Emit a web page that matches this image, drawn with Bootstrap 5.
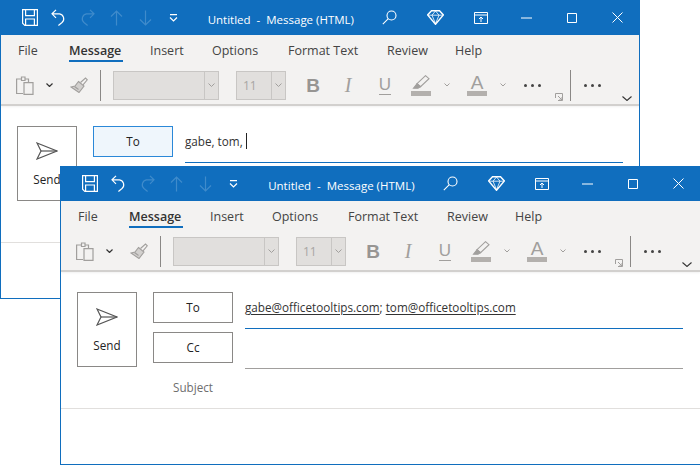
<!DOCTYPE html>
<html lang="en">
<head>
  <meta charset="UTF-8">
  <title>Untitled - Message (HTML)</title>
  <link href="https://cdn.jsdelivr.net/npm/bootstrap@5.3.2/dist/css/bootstrap.min.css" rel="stylesheet">
  <script src="https://cdn.jsdelivr.net/npm/bootstrap@5.3.2/dist/js/bootstrap.bundle.min.js"></script>
  <style>
    html, body { width: 700px; height: 465px; overflow: hidden; background: #fff; }
    body { font-family: "Open Sans", "Liberation Sans", sans-serif; font-size: 11.7px; color: #333; }
    svg { display: block; fill: none; stroke: currentColor; flex: none; }

    .mail-window { position: absolute; width: 640px; height: 299px; background: #fff; border: solid #106ebe; border-width: 0 1px 1px 1px; overflow: hidden; }
    .win-back { left: 0; top: 0; }
    .win-front { left: 60px; top: 166px; width: 641px; }

    .title-bar { height: 35px; background: #106ebe; color: #fff; margin: 0 -1px; }
    .qat { width: 208px; padding-left: 15.5px; }
    .qat-btn { width: 28.8px; }
    .qat-btn svg, .tool-btn svg { margin: 0 auto; }
    .qat-btn.off { color: #3f8bcb; }
    .doc-title { width: 161.5px; padding: 5px 0 0 1px; font-size: 11.5px; white-space: pre; }
    .tool-btn { width: 45.5px; }

    .ribbon { height: 71px; background: #f3f2f1; border-bottom: 2px solid #d2d0ce; position: relative; box-shadow: 0 1px 2px rgba(0,0,0,.06); }
    .tab-row { height: 31px; font-size: 12.5px; color: #444; }
    .tab-item { line-height: 31px; white-space: nowrap; }
    .tab-file { margin-left: 17px; width: 51px; }
    .tab-message { width: 54px; margin-right: 27px; }
    .tab-insert { width: 62px; }
    .tab-options { width: 76px; }
    .tab-format { width: 99px; }
    .tab-review { width: 68px; }
    .tab-item.active { font-weight: 600; color: #333; height: 27px; border-bottom: 2px solid #106ebe; }

    .tool-row { height: 38px; color: #a19f9d; }
    .rib-sep { width: 1px; height: 31px; background: #8a8886; flex: none; margin-left: 12px; }
    .rib-sep.second { margin-left: 7px; }
    .combo { height: 29px; background: #e1dfdd; border: 1px solid #c8c6c4; flex: none; }
    .combo-font { width: 106px; margin-left: 12px; }
    .combo-size { width: 50px; margin-left: 17px; }
    .combo-text { flex: 1 1 auto; color: #a8a6a4; font-size: 12px; padding-left: 6px; line-height: 27px; }
    .combo-arrow { width: 14px; height: 27px; border-left: 1px solid #c8c6c4; color: #a19f9d; flex: none; }
    .fmt { width: 30px; color: #a19f9d; line-height: 1; text-align: center; flex: none; }
    .fmt-b { font-family: "Liberation Sans", sans-serif; font-weight: 700; font-size: 19px; color: #979593; margin-left: 12px; }
    .fmt-i { font-family: "Liberation Serif", serif; font-style: italic; font-size: 20px; margin-left: 5px; }
    .fmt-u { font-family: "Liberation Sans", sans-serif; font-size: 17px; margin-left: 7px; }
    .fmt-u span { display: inline-block; padding: 0 0 1px; border-bottom: 1px solid #a19f9d; line-height: 16px; }
    .color-btn { width: 20px; flex: none; }
    .color-bar { height: 5px; background: #b3b0ad; margin-top: 1px; }
    .color-a { font-family: "Liberation Sans", sans-serif; font-size: 19px; line-height: 15px; text-align: center; color: #a19f9d; }
    .dots { display: flex; gap: 4px; flex: none; }
    .dots i { width: 3px; height: 3px; border-radius: 50%; background: #444; }

    .ic-paste { margin-left: 15px; }
    .ic-paste-drop { margin-left: 12px; color: #333; }
    .ic-brush { margin-left: 17px; }
    .btn-highlight { margin-left: 11px; }
    .drop-small { margin-left: 13px; }
    .btn-fontcolor { margin-left: 17px; }
    .dots-first { margin-left: 18px; }
    .dots-second { margin-left: 13px; }
    .ic-launcher { margin: 0 0 3px 14px; }
    .ic-collapse { margin: 0 0 3px 21px; color: #333; }

    .compose { height: 137px; padding: 20px 0 0 16px; border-bottom: 1px solid #e1dfdd; }
    .send-btn { width: 60px; height: 75px; border: 1px solid #8a8886; color: #222; padding-top: 15px; }
    .send-btn svg { stroke: #555; }
    .send-btn span { margin-top: 11px; line-height: 16px; }
    .addr-col { width: 80px; margin-left: 16px; gap: 9px; }
    .addr-btn { width: 80px; height: 31px; border: 1px solid #8a8886; color: #222; line-height: 28px; text-align: center; }
    .addr-btn.focus { background: #eff6fc; border-color: #2b88d8; }
    .subject { color: #6e6e6e; text-align: center; line-height: 16px; margin-top: 7px; }
    .field-col { width: 438px; margin-left: 12px; }
    .field { line-height: 31px; color: #333; white-space: nowrap; }
    .field-to { height: 37px; border-bottom: 1px solid #106ebe; }
    .field-cc { height: 40px; border-bottom: 1px solid #a19f9d; }
    .field u { text-underline-offset: 2px; }
    .caret-bar { display: inline-block; width: 1px; height: 16px; background: #222; vertical-align: -3px; margin-left: 3px; }
  </style>
</head>
<body>

  <template id="chrome">
    <div class="title-bar d-flex align-items-center">
      <div class="qat d-flex align-items-center">
        <div class="qat-btn"><svg width="16" height="17" viewBox="0 0 16 17" stroke-width="1.2"><path d="M.6.6h14.8v15.800H2.800L.6 14.200z"/><path d="M3.600.6v6h8.800v-6M3.600 16.200v-6.200h8.800v6.200"/></svg></div>
        <div class="qat-btn"><svg width="15" height="17" viewBox="0 0 15 17" stroke-width="1.2"><path d="M5 .8 1 4.800l4 4M1 4.800h7.500a5 5 0 0 1 2.500 8.700l-3.600 3"/></svg></div>
        <div class="qat-btn off"><svg width="15" height="17" viewBox="0 0 15 17" stroke-width="1.2"><path d="m10 .8 4 4-4 4M14 4.800H6.500a5 5 0 0 0-2.500 8.700l3.600 3"/></svg></div>
        <div class="qat-btn off"><svg width="13" height="16" viewBox="0 0 13 16" stroke-width="1.2"><path d="M6.500 15.500V1M1 6.500l5.500-5.500 5.500 5.500"/></svg></div>
        <div class="qat-btn off"><svg width="13" height="16" viewBox="0 0 13 16" stroke-width="1.2"><path d="M6.500.5V15M1 9.500l5.500 5.500 5.500-5.500"/></svg></div>
        <div class="qat-btn"><svg width="9" height="8" viewBox="0 0 9 8" stroke-width="1.2"><path d="M1 .6h7M1 3.500l3.500 3.500L8 3.500"/></svg></div>
      </div>
      <div class="doc-title">Untitled  -  Message (HTML)</div>
      <div class="d-flex align-items-center">
        <div class="tool-btn"><svg width="15" height="15" viewBox="0 0 15 15" stroke-width="1.1"><circle cx="9.500" cy="5.500" r="4.500"/><path d="M6.300 8.700.8 14.200"/></svg></div>
        <div class="tool-btn"><svg width="17" height="15" viewBox="0 0 17 15" stroke-width=".8"><path d="M4.500.7h8l3.900 4.300-7.900 9.300L.6 5z" stroke-width="1.400"/><path d="M1 5.200h15M5 5.200l3.500 8.500L12 5.200 8.500 1z"/></svg></div>
        <div class="tool-btn"><svg width="14" height="12" viewBox="0 0 14 12" stroke-width="1"><path d="M.5.5h13v11H.5zM.5 3h13M7 10V5M5 7l2-2 2 2"/></svg></div>
        <div class="tool-btn"><svg width="11" height="2" viewBox="0 0 11 2"><path d="M0 1h11"/></svg></div>
        <div class="tool-btn"><svg width="10" height="10" viewBox="0 0 10 10"><path d="M.5.5h9v9h-9z"/></svg></div>
        <div class="tool-btn"><svg width="11" height="11" viewBox="0 0 11 11"><path d="m.5.5 10 10M10.500.5l-10 10"/></svg></div>
      </div>
    </div>
    <div class="ribbon">
      <div class="tab-row d-flex align-items-start">
        <div class="tab-item tab-file">File</div>
        <div class="tab-item tab-message active">Message</div>
        <div class="tab-item tab-insert">Insert</div>
        <div class="tab-item tab-options">Options</div>
        <div class="tab-item tab-format">Format Text</div>
        <div class="tab-item tab-review">Review</div>
        <div class="tab-item">Help</div>
      </div>
      <div class="tool-row d-flex align-items-center">
        <svg class="ic-paste" width="18" height="19" viewBox="0 0 18 19" stroke-width="1.2"><path d="M5 3H.6v14.500H7M5.500 1h3.500v3.500H5.500zM9 3h3.500v3"/><path d="M8 6.600h9v11.800H8z"/></svg>
        <svg class="ic-paste-drop" width="7" height="4" viewBox="0 0 7 4" stroke-width="1.2"><path d="m.5.500 3 3 3-3"/></svg>
        <svg class="ic-brush" width="18" height="16" viewBox="0 0 18 16" stroke-width="1.1"><path d="m10.500 5.500 5-4.500 1.800 1.800-4.300 5"/><path d="m8.500 4.500 5.500 4.500-5 6.500-8-5.500 4-1z" fill="#d2d0ce"/><path d="m4.500 9.500 4 3"/></svg>
        <div class="rib-sep"></div>
        <div class="combo combo-font d-flex">
          <div class="combo-text"></div>
          <div class="combo-arrow d-flex align-items-center justify-content-center"><svg width="7" height="4" viewBox="0 0 7 4"><path d="m.5.500 3 3 3-3"/></svg></div>
        </div>
        <div class="combo combo-size d-flex">
          <div class="combo-text">11</div>
          <div class="combo-arrow d-flex align-items-center justify-content-center"><svg width="7" height="4" viewBox="0 0 7 4"><path d="m.5.500 3 3 3-3"/></svg></div>
        </div>
        <div class="fmt fmt-b">B</div>
        <div class="fmt fmt-i">I</div>
        <div class="fmt fmt-u"><span>U</span></div>
        <div class="color-btn btn-highlight">
          <svg width="20" height="15" viewBox="0 0 20 15" stroke-width="1.1"><path d="m14.500.7 3.500 3-8.500 8-3.500-3z"/><path d="m6 8.700 3.500 3-2.500 1.500H2.500z" fill="#a19f9d"/></svg>
          <div class="color-bar"></div>
        </div>
        <svg class="drop-small" width="6" height="4" viewBox="0 0 6 4"><path d="m.5.500 2.500 2.500 2.500-2.500"/></svg>
        <div class="color-btn btn-fontcolor">
          <div class="color-a">A</div>
          <div class="color-bar"></div>
        </div>
        <svg class="drop-small" width="6" height="4" viewBox="0 0 6 4"><path d="m.5.500 2.500 2.500 2.500-2.500"/></svg>
        <div class="dots dots-first"><i></i><i></i><i></i></div>
        <svg class="ic-launcher align-self-end" width="8" height="8" viewBox="0 0 8 8"><path d="M.5 5V.5h7v7H3M3 3l4 4M7 4v3H4"/></svg>
        <div class="rib-sep second"></div>
        <div class="dots dots-second"><i></i><i></i><i></i></div>
        <svg class="ic-collapse align-self-end" width="10" height="5" viewBox="0 0 10 5" stroke-width="1.1"><path d="m.5.500 4.500 4 4.500-4"/></svg>
      </div>
    </div>
  </template>

  <div class="mail-window win-back">
    <div class="compose d-flex align-items-start">
      <div class="send-btn d-flex flex-column align-items-center">
        <svg width="22" height="18" viewBox="0 0 22 18" stroke-width="1.2"><path d="M1 1l20 8-20 8 4-8z"/><path d="M5 9h16"/></svg>
        <span>Send</span>
      </div>
      <div class="addr-col d-flex flex-column">
        <div class="addr-btn focus">To</div>
      </div>
      <div class="field-col">
        <div class="field field-to">gabe, tom,<span class="caret-bar"></span></div>
      </div>
    </div>
  </div>

  <div class="mail-window win-front">
    <div class="compose d-flex align-items-start">
      <div class="send-btn d-flex flex-column align-items-center">
        <svg width="22" height="18" viewBox="0 0 22 18" stroke-width="1.2"><path d="M1 1l20 8-20 8 4-8z"/><path d="M5 9h16"/></svg>
        <span>Send</span>
      </div>
      <div class="addr-col d-flex flex-column">
        <div class="addr-btn">To</div>
        <div class="addr-btn">Cc</div>
        <div class="subject">Subject</div>
      </div>
      <div class="field-col">
        <div class="field field-to"><u>gabe@officetooltips.com</u>; <u>tom@officetooltips.com</u></div>
        <div class="field field-cc"></div>
      </div>
    </div>
  </div>

  <script>
    // same title bar + ribbon on both windows
    document.querySelectorAll('.mail-window').forEach(function (w) {
      w.prepend(document.getElementById('chrome').content.cloneNode(true));
    });
  </script>
</body>
</html>
